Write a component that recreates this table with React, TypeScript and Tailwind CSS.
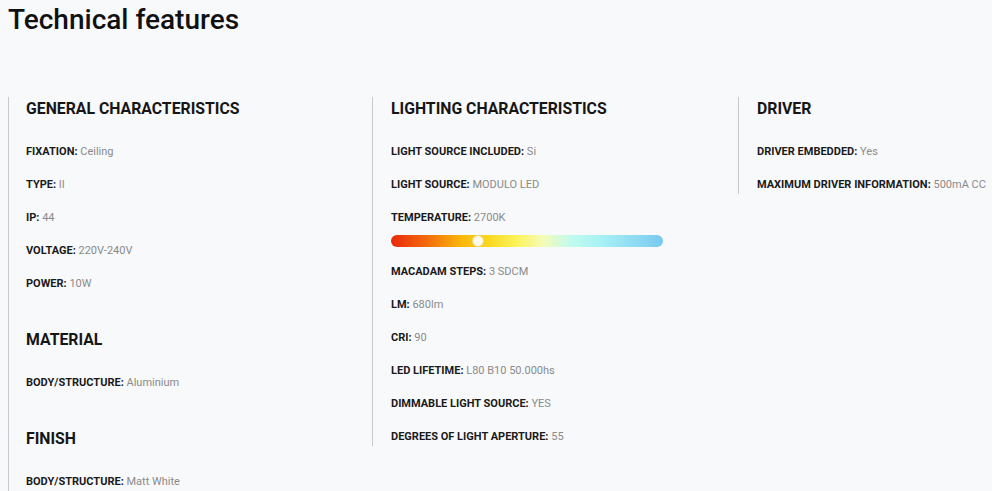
import React from "react";

type Item = [string, string];

function Row({ label, value }: { label: string; value: string }) {
  return (
    <div className="mt-[17px] first:mt-[25px] h-4 leading-4 text-[11px] whitespace-nowrap">
      <span className="font-bold text-[#1a1a1a]">{label}:</span>{" "}
      <span className="text-[#8a8a8a]">{value}</span>
    </div>
  );
}

function Heading({ children, first }: { children: React.ReactNode; first?: boolean }) {
  return (
    <h3 className={`h-5 leading-5 text-[15.8px] font-bold text-[#161616] whitespace-nowrap ${first ? "" : "mt-[38px]"}`}>
      {children}
    </h3>
  );
}

function Section({ title, items, first }: { title: string; items: Item[]; first?: boolean }) {
  return (
    <div>
      <Heading first={first}>{title}</Heading>
      <div>
        {items.map(([l, v]) => (
          <Row key={l + v} label={l} value={v} />
        ))}
      </div>
    </div>
  );
}

export default function App() {
  return (
    <div
      className="w-[992px] h-[491px] overflow-hidden bg-[#f8f9fb] text-[#161616]"
      style={{ fontFamily: "Roboto, 'Liberation Sans', sans-serif" }}
    >
      <h1 className="pl-2 pt-[3px] text-[28px] leading-[34px] font-medium text-[#111]">Technical features</h1>
      <div className="mt-[60px] ml-2 flex items-start">
        <div className="w-[364px] shrink-0 border-l border-[#c9c9c9] pl-[17px] pt-[2px] pb-[20px]">
          <Section
            first
            title="GENERAL CHARACTERISTICS"
            items={[
              ["FIXATION", "Ceiling"],
              ["TYPE", "II"],
              ["IP", "44"],
              ["VOLTAGE", "220V-240V"],
              ["POWER", "10W"],
            ]}
          />
          <Section title="MATERIAL" items={[["BODY/STRUCTURE", "Aluminium"]]} />
          <Section title="FINISH" items={[["BODY/STRUCTURE", "Matt White"]]} />
        </div>
        <div className="w-[366px] shrink-0 border-l border-[#c9c9c9] pl-[18px] pt-[2px] pb-[1px]">
          <Heading first>LIGHTING CHARACTERISTICS</Heading>
          <div>
            <Row label="LIGHT SOURCE INCLUDED" value="Si" />
            <Row label="LIGHT SOURCE" value="MODULO LED" />
            <Row label="TEMPERATURE" value="2700K" />
            <div className="relative mt-[9px] h-3 w-[272px] rounded-full bg-[linear-gradient(90deg,#e8280c_0%,#f3700a_14%,#f9b80c_26%,#fbd820_36%,#fdf35a_46%,#f4fbb8_56%,#c2fbee_66%,#a6f0f6_78%,#79c9ef_100%)]">
              <div className="absolute left-[81px] top-[0px] h-3 w-3 rounded-full bg-[#fffbe8] border border-[#e8d88a]" />
            </div>
            <Row label="MACADAM STEPS" value="3 SDCM" />
            <Row label="LM" value="680lm" />
            <Row label="CRI" value="90" />
            <Row label="LED LIFETIME" value="L80 B10 50.000hs" />
            <Row label="DIMMABLE LIGHT SOURCE" value="YES" />
            <Row label="DEGREES OF LIGHT APERTURE" value="55" />
          </div>
        </div>
        <div className="w-[365px] shrink-0 border-l border-[#c9c9c9] pl-[18px] pt-[2px] pb-[1px]">
          <Section
            first
            title="DRIVER"
            items={[
              ["DRIVER EMBEDDED", "Yes"],
              ["MAXIMUM DRIVER INFORMATION", "500mA CC"],
            ]}
          />
        </div>
      </div>
    </div>
  );
}
